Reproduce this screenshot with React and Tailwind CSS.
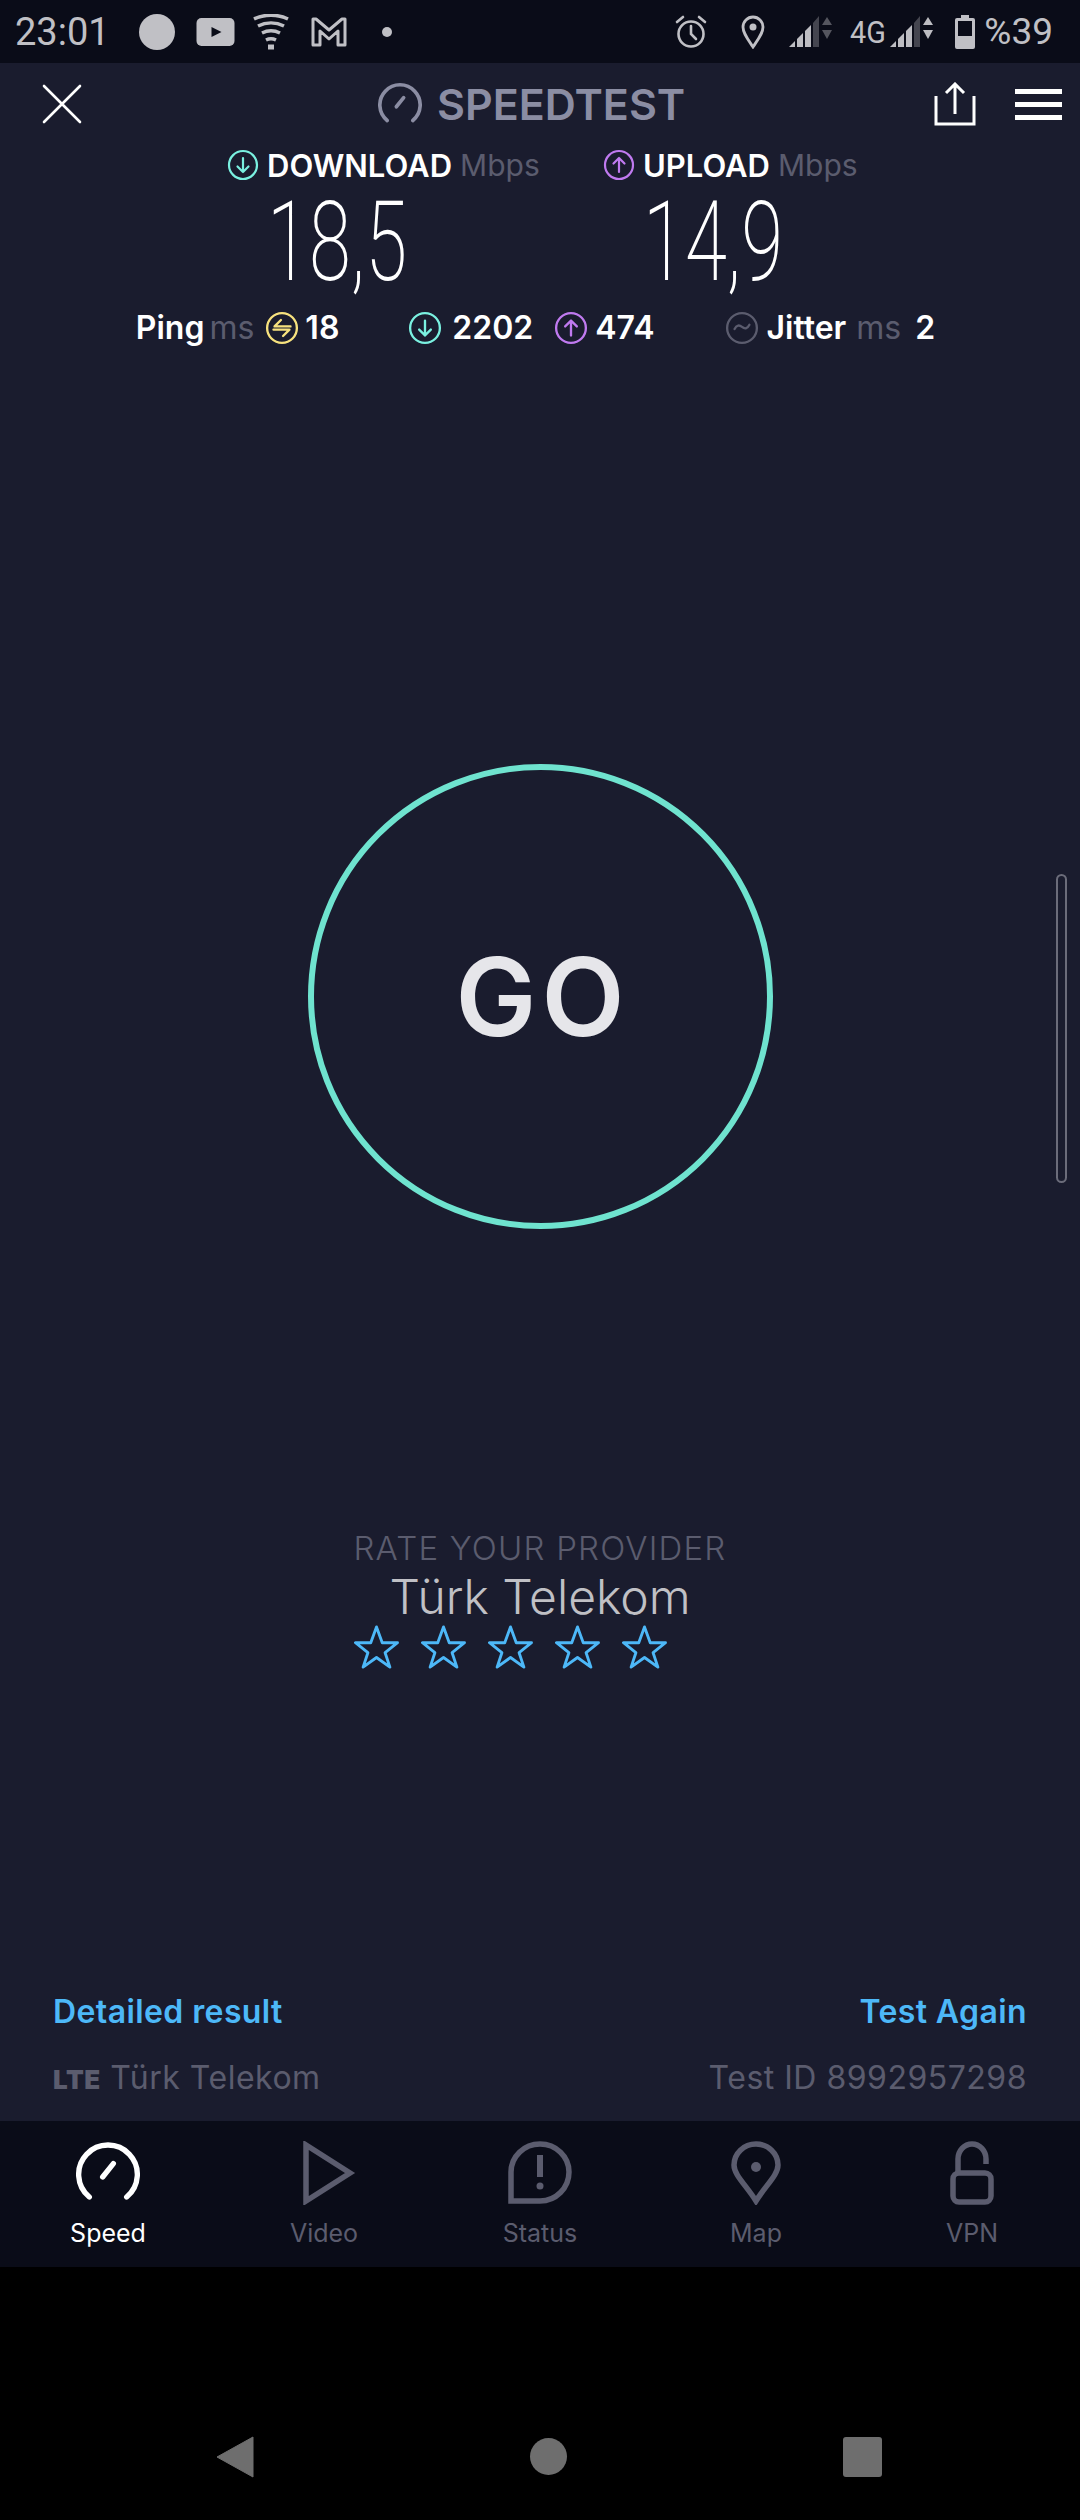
const sans = 'font-["Inter","Open_Sans",sans-serif]';

const Gauge = ({ className, width = 4 }) => (
  <svg viewBox="0 0 48 48" fill="none" stroke="currentColor" strokeWidth={width} strokeLinecap="round" className={className}>
    <path d="M10 42 A22 22 0 1 1 38 42" />
    <path d="M20 27 L28 17" />
  </svg>
);

const CircleIcon = ({ color, kind, className = 'w-8 h-8' }) => (
  <svg viewBox="0 0 32 32" fill="none" stroke={color} strokeWidth="2.2" strokeLinecap="round" strokeLinejoin="round" className={`${className} shrink-0`}>
    <circle cx="16" cy="16" r="14" />
    {kind === 'down' && <path d="M16 9v14M10.5 17.5 16 23l5.5-5.5" />}
    {kind === 'up' && <path d="M16 23V9M10.5 14.5 16 9l5.5 5.5" />}
    {kind === 'ping' && <path d="M24 14.5H9l6-6M8 17.5h15l-6 6" />}
    {kind === 'jitter' && <path d="M9 17c2-4 4.500-4 7-2s5 2 7-2" />}
  </svg>
);

const Signal = ({ dim }) => (
  <svg viewBox="0 0 46 34" className="w-[46px] h-[34px]">
    <path d="M0 32 L6 26 V32Z" fill="#bdbdc2" />
    <path d="M8 24 L14 18 V32 H8Z" fill="#bdbdc2" />
    <path d="M16 16 L22 10 V32 H16Z" fill="#bdbdc2" />
    <path d="M24 8 L30 1 V32 H24Z" fill="#44454f" />
    <path d="M38 2 L43 10 H33Z" fill={dim ? '#55565f' : '#bdbdc2'} />
    <path d="M38 24 L33 15 H43Z" fill={dim ? '#55565f' : '#bdbdc2'} />
  </svg>
);

const StatusBar = () => (
  <div className="h-[63px] shrink-0 bg-[#0a0c18] flex items-center justify-between pl-[15px] pr-[27px] text-[#c0c0c5] font-['Roboto',sans-serif]">
    <div className="flex items-center">
      <span className="text-[38px] leading-none">23:01</span>
      <div className="w-9 h-9 rounded-full bg-[#c0c0c5] ml-[29px]" />
      <svg viewBox="0 0 38 28" className="w-[39px] h-7 ml-[21px]">
        <rect width="38" height="28" rx="5" fill="#c0c0c5" />
        <path d="M15 9l10 5-10 5z" fill="#0a0c18" />
      </svg>
      <svg viewBox="0 0 36 36" fill="none" stroke="#c0c0c5" strokeWidth="3.500" className="w-[38px] h-9 ml-[17px]">
        <path d="M1 5c10-5 24-5 34 0M5 12c8-4 18-4 26 0M9 19c6-3 12-3 18 0M13 26c3-1.500 7-1.500 10 0" />
        <path d="M15 33h6" strokeWidth="5" />
      </svg>
      <svg viewBox="0 0 36 30" fill="none" stroke="#c0c0c5" strokeWidth="3" strokeLinejoin="round" className="w-9 h-[30px] ml-[21px]">
        <path d="M2 28V2h3l13 11L31 2h3v26h-7V14l-9 8-9-8v14z" />
      </svg>
      <div className="w-[10px] h-[10px] rounded-full bg-[#c0c0c5] ml-[35px]" />
    </div>
    <div className="flex items-center">
      <svg viewBox="0 0 32 34" fill="none" stroke="#c0c0c5" strokeWidth="2.600" strokeLinecap="round" className="w-8 h-[34px]">
        <circle cx="16" cy="19" r="12.500" />
        <path d="M16 11v8l5 5M2 7l6-5M30 7l-6-5" />
      </svg>
      <svg viewBox="0 0 24 34" fill="none" stroke="#c0c0c5" strokeWidth="2.800" className="w-6 h-[34px] ml-[34px]">
        <path d="M12 32C6 23 2 18 2 12a10 10 0 0 1 20 0c0 6-4 11-10 20z" />
        <circle cx="12" cy="12" r="3.500" fill="#c0c0c5" stroke="none" />
      </svg>
      <div className="ml-[24px]"><Signal dim /></div>
      <span className="text-[32px] leading-none ml-[15px] scale-x-90 origin-left w-[35px]">4G</span>
      <div className="ml-[5px]"><Signal /></div>
      <svg viewBox="0 0 20 34" className="w-5 h-[34px] ml-[19px]">
        <path d="M6 0h8v3h4a2 2 0 0 1 2 2v27a2 2 0 0 1-2 2H2a2 2 0 0 1-2-2V5a2 2 0 0 1 2-2h4z" fill="#c0c0c5" />
        <rect x="3" y="6" width="14" height="15" fill="#0a0c18" />
      </svg>
      <span className="text-[37px] leading-none ml-[9px]">%39</span>
    </div>
  </div>
);

const Header = () => (
  <div className="h-[82px] flex items-center pl-[42px] pr-[18px]">
    <svg viewBox="0 0 40 40" stroke="white" strokeWidth="2.600" strokeLinecap="round" className="w-10 h-10">
      <path d="M2 2l36 36M38 2L2 38" />
    </svg>
    <div className="flex items-center text-[#8b8da3] ml-[296px]">
      <Gauge className="w-[44px] h-[44px]" width={4} />
      <span className="text-[43px] leading-none font-semibold ml-[15px]">SPEEDTEST</span>
    </div>
    <div className="flex items-center ml-auto">
      <svg viewBox="0 0 42 44" fill="none" stroke="white" strokeWidth="3" className="w-[42px] h-[44px]">
        <path d="M2 14v28h38V14M21 32V3M12 11l9-9 9 9" />
      </svg>
      <div className="flex flex-col gap-[8px] ml-[39px]">
        <div className="w-[47px] h-[5px] bg-white" />
        <div className="w-[47px] h-[5px] bg-white" />
        <div className="w-[47px] h-[5px] bg-white" />
      </div>
    </div>
  </div>
);

const Metric = ({ kind, color, label, value }) => (
  <div className="w-[376px] flex flex-col">
    <div className="flex items-center h-8 whitespace-nowrap">
      <CircleIcon color={color} kind={kind} />
      <span className="text-[31px] font-semibold text-white ml-2 leading-none">{label}</span>
      <span className="text-[30px] text-[#5b5c6e] ml-2 leading-none">Mbps</span>
    </div>
    <div className="h-[116px] flex items-center pl-[40px] mt-[3px]">
      <span className="font-['Roboto',sans-serif] font-extralight text-[112px] leading-none text-white scale-x-[0.68] origin-left">{value}</span>
    </div>
  </div>
);

const Stats = () => (
  <div className="flex justify-center items-center text-[32px] text-white font-semibold leading-none mt-[11px] mr-[9px] whitespace-nowrap">
    <span>Ping</span>
    <span className="text-[#5b5c6e] font-normal ml-[5px] mr-[11px]">ms</span>
    <CircleIcon color="#f7e27e" kind="ping" className="w-[34px] h-[34px]" />
    <span className="ml-[6px]">18</span>
    <div className="w-[69px]" />
    <CircleIcon color="#7af0e0" kind="down" className="w-[34px] h-[34px]" />
    <span className="ml-[10px]">2202</span>
    <div className="w-[21px]" />
    <CircleIcon color="#c07af0" kind="up" className="w-[34px] h-[34px]" />
    <span className="ml-[7px]">474</span>
    <div className="w-[71px]" />
    <CircleIcon color="#5b5c6e" kind="jitter" className="w-[34px] h-[34px]" />
    <span className="ml-[7px]">Jitter</span>
    <span className="text-[#5b5c6e] font-normal ml-[10px] mr-[14px]">ms</span>
    <span>2</span>
  </div>
);

const Star = () => (
  <svg viewBox="0 0 48 46" fill="none" stroke="#4db8f8" strokeWidth="3" strokeLinejoin="round" className="w-[47px] h-[44px]">
    <path d="M24 2l6 16.500h16L33 29l5 15-14-10-14 10 5-15L2 18.500h16z" />
  </svg>
);

const TabIcon = ({ name }) => {
  if (name === 'Speed') return <Gauge className="w-[64px] h-[64px] text-white" width={4} />;
  const base = { fill: 'none', stroke: '#5b5c6e', strokeWidth: 5.5, className: 'w-[64px] h-[64px]', viewBox: '0 0 64 64' };
  if (name === 'Video') return <svg {...base}><path d="M14 4v56l44-28z" /></svg>;
  if (name === 'Status') return (
    <svg {...base}>
      <path d="M3 60V31a29 28 0 0 1 58 0c0 16-13 29-29 29z" />
      <path d="M32 14v22" strokeWidth="6" />
      <circle cx="32" cy="45" r="3.500" fill="#5b5c6e" stroke="none" />
    </svg>
  );
  if (name === 'Map') return (
    <svg {...base}>
      <path d="M32 60C22 44 10 34 10 24a22 21 0 0 1 44 0c0 10-12 20-22 36z" />
      <circle cx="32" cy="26" r="5" fill="#5b5c6e" stroke="none" />
    </svg>
  );
  return (
    <svg {...base}>
      <path d="M18 32V18a14 15 0 0 1 28 0v5" />
      <rect x="13" y="32" width="38" height="29" rx="6" />
    </svg>
  );
};

const tabs = ['Speed', 'Video', 'Status', 'Map', 'VPN'];

const TabBar = () => (
  <div className="h-[146px] shrink-0 bg-[#0a0c18] flex pt-[20px]">
    {tabs.map((name) => (
      <div key={name} className="w-[216px] flex flex-col items-center">
        <TabIcon name={name} />
        <span className={`text-[25px] leading-none mt-[16px] ${name === 'Speed' ? 'text-white' : 'text-[#5b5c6e]'}`}>{name}</span>
      </div>
    ))}
  </div>
);

const NavBar = () => (
  <div className="flex-1 bg-black flex items-end justify-between pl-[216px] pr-[198px] pb-[42px]">
    <svg viewBox="0 0 38 42" className="w-[38px] h-[42px]"><path d="M37 1v40L1 21z" fill="#6e6e6e" stroke="#6e6e6e" strokeLinejoin="round" strokeWidth="1" /></svg>
    <div className="w-[37px] h-[37px] rounded-full bg-[#6e6e6e] mb-[3px]" />
    <div className="w-[39px] h-[40px] rounded-[3px] bg-[#6e6e6e] mb-[1px]" />
  </div>
);

export default function App() {
  return (
    <div className={`relative w-[1080px] h-[2520px] flex flex-col overflow-hidden ${sans}`}>
      <StatusBar />
      <div className="h-[2058px] shrink-0 bg-[#1a1c2e] flex flex-col">
        <Header />
        <div className="flex pl-[227px] mt-[4px]">
          <Metric kind="down" color="#7af0e0" label="DOWNLOAD" value="18,5" />
          <Metric kind="up" color="#c07af0" label="UPLOAD" value="14,9" />
        </div>
        <Stats />
        <div className="mt-[419px] self-center w-[465px] h-[465px] rounded-full border-[6px] border-[#6fe3cf] flex items-center justify-center">
          <span className="text-[108px] font-semibold text-[#e6e6ea] leading-none tracking-[5px] pl-[5px]">GO</span>
        </div>
        <div className="mt-[303px] flex flex-col items-center">
          <span className="text-[33px] font-light text-[#5b5c6e] leading-none tracking-[1.2px]">RATE YOUR PROVIDER</span>
          <span className="text-[48px] font-light text-[#c0c0c5] leading-none mt-[8px]">Türk Telekom</span>
          <div className="flex gap-[20px] mt-[4px] mr-[59px]">
            {[0, 1, 2, 3, 4].map((i) => <Star key={i} />)}
          </div>
        </div>
        <div className="mt-auto px-[53px] pb-[27px]">
          <div className="flex justify-between text-[32px] font-semibold text-[#4db8f8] leading-none tracking-[0.4px]">
            <span>Detailed result</span>
            <span>Test Again</span>
          </div>
          <div className="flex justify-between items-center text-[32px] text-[#5b5c6e] leading-none mt-[34px] tracking-[0.5px]">
            <span><span className="font-black text-[26px]">LTE</span> Türk Telekom</span>
            <span>Test ID 8992957298</span>
          </div>
        </div>
      </div>
      <TabBar />
      <NavBar />
      <div className="absolute left-[1056px] top-[874px] w-[11px] h-[309px] rounded-full border-2 border-[#6b6c7a]" />
    </div>
  );
}
